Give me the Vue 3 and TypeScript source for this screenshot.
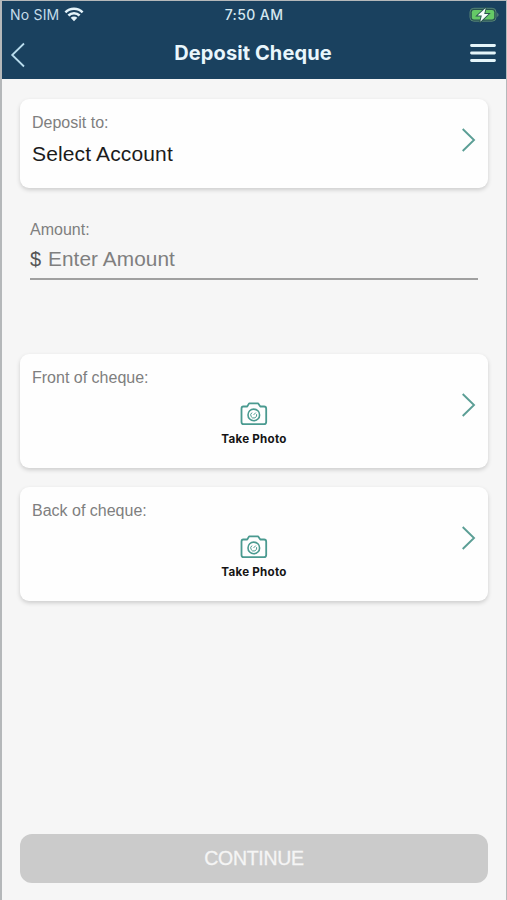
<script setup lang="ts">
interface ChequeSide {
  id: string
  label: string
}

const sides: ChequeSide[] = [
  { id: 'front', label: 'Front of cheque:' },
  { id: 'back', label: 'Back of cheque:' },
]
</script>

<template>
  <div class="screen">
    <header class="header">
      <div class="status">
        <div class="carrier">
          <span>No SIM</span>
          <svg class="wifi" width="20" height="15" viewBox="0 0 20 15">
            <path d="M1.4 5.4A12 12 0 0 1 18.6 5.4M4.4 8.5A7.9 7.9 0 0 1 15.6 8.5" fill="none" stroke="#e4f3fa" stroke-width="2.5" />
            <path d="M6.7 10.8A4.6 4.6 0 0 1 13.3 10.8L10 14.3Z" fill="#e4f3fa" />
          </svg>
        </div>
        <span class="time">7:50 AM</span>
        <svg class="battery" width="31" height="16" viewBox="0 0 31 16">
          <rect x="1" y="1.3" width="26" height="12.9" rx="3.8" fill="#28534f" stroke="#568577" stroke-width="1" />
          <rect x="2.8" y="3" width="22.4" height="9.5" rx="2.2" fill="#65c966" />
          <path d="M28.2 5.4Q31 7.7 28.2 10Z" fill="#568577" />
          <path d="M16.7 .9L8.5 8.5H12.8L11.3 14.8L19.5 6.9H15.2Z" fill="#f4fff9" stroke="#28534f" stroke-width="1.8" paint-order="stroke" />
        </svg>
      </div>
      <div class="nav">
        <svg class="back" width="16" height="26" viewBox="0 0 16 26">
          <path d="M14 1.5L2.2 13L14 24.5" fill="none" stroke="#b9dced" stroke-width="1.8" />
        </svg>
        <h1>Deposit Cheque</h1>
        <svg class="menu" width="26" height="20" viewBox="0 0 26 20">
          <path d="M1.5 2.5H24.5M1.5 10H24.5M1.5 17.5H24.5" stroke="#e5f5fa" stroke-width="2.8" stroke-linecap="round" />
        </svg>
      </div>
    </header>

    <main class="content">
      <section class="card account">
        <div>
          <div class="label">Deposit to:</div>
          <div class="value">Select Account</div>
        </div>
        <svg class="chevron" width="14" height="24" viewBox="0 0 14 24">
          <path d="M.7 1L12 12L.7 23" fill="none" stroke="#5b9e95" stroke-width="1.9" />
        </svg>
      </section>

      <section class="amount">
        <div class="label">Amount:</div>
        <div class="entry"><span class="dollar">$</span><span class="placeholder">Enter Amount</span></div>
      </section>

      <section v-for="side in sides" :key="side.id" class="card photo">
        <div class="label">{{ side.label }}</div>
        <div class="capture">
          <svg width="28" height="24" viewBox="0 0 28 24" fill="none" stroke="#4a9a90" stroke-width="1.8">
            <path d="M3.3 4.5H7.2L9.1 1.4H18.2L20.3 4.5H24Q26.2 4.5 26.2 6.7V20Q26.2 22.2 24 22.2H3.6Q1.5 22.2 1.5 20V6.7Q1.5 4.5 3.3 4.5Z" stroke-linejoin="round" />
            <circle cx="13.8" cy="12.9" r="5.8" stroke-width="1.6" />
            <path d="M12 10.6A3 3 0 1 0 16.6 12.2M13.6 12.9L15.8 10.6" stroke-width="1" />
          </svg>
          <span>Take Photo</span>
        </div>
        <svg class="chevron" width="14" height="24" viewBox="0 0 14 24">
          <path d="M.7 1L12 12L.7 23" fill="none" stroke="#5b9e95" stroke-width="1.9" />
        </svg>
      </section>

      <button class="continue" type="button">CONTINUE</button>
    </main>
  </div>
</template>

<style>
body {
  margin: 0;
  background: #f6f6f6;
}
</style>

<style scoped>
.screen {
  box-sizing: border-box;
  display: flex;
  flex-direction: column;
  width: 507px;
  height: 900px;
  overflow: hidden;
  border: solid #b5b8ba;
  border-width: 1px 1px 0 2px;
  background: #f6f6f6;
  font-family: "Liberation Sans", Arial, sans-serif;
}
.header {
  flex: none;
  height: 78px;
  background: #1a415f;
  color: #e9f6fc;
  font-family: Inter, sans-serif;
}
.status {
  display: grid;
  grid-template-columns: 1fr auto 1fr;
  align-items: center;
  height: 28px;
  padding: 0 6px 0 8px;
  font-size: 14px;
  line-height: 28px;
}
.carrier {
  display: flex;
  align-items: center;
  gap: 5px;
  color: #c5dce9;
  letter-spacing: 0.2px;
}
.wifi {
  margin-top: -2px;
}
.time {
  margin-right: 2px;
  color: #d5e7ef;
  font-weight: 500;
  letter-spacing: 0.4px;
}
.battery {
  justify-self: end;
  margin-top: -1px;
}
.nav {
  display: grid;
  grid-template-columns: 1fr auto 1fr;
  align-items: center;
  height: 46px;
  padding: 0 10px 0 8px;
}
.back {
  margin-top: 4px;
}
.menu {
  justify-self: end;
  margin-top: -1px;
}
h1 {
  margin: 0;
  font-size: 20px;
  font-weight: 650;
  letter-spacing: 0.1px;
  line-height: 48px;
}
.content {
  display: flex;
  flex: 1;
  flex-direction: column;
  padding: 20px 18px 17px;
}
.card {
  box-sizing: border-box;
  border-radius: 9px;
  background: #fefefe;
  box-shadow: 0 2px 4px rgba(0, 0, 0, 0.17);
}
.account {
  display: flex;
  justify-content: space-between;
  height: 89px;
  padding: 14px 12px;
}
.account .chevron {
  margin-top: 15px;
}
.label {
  color: #7f7f7f;
  font-size: 16px;
  line-height: 20px;
}
.value {
  margin-top: 8px;
  color: #1b1b1b;
  font-size: 21px;
  letter-spacing: 0.14px;
  line-height: 26px;
}
.amount {
  margin: 32px 10px 74px;
  border-bottom: 2px solid #a0a0a0;
}
.entry {
  display: flex;
  gap: 7px;
  height: 38px;
  font-size: 20.8px;
  letter-spacing: 0.08px;
  line-height: 38px;
}
.dollar {
  width: 11px;
  color: #555;
  font-size: 20px;
}
.placeholder {
  color: #7f7f7f;
}
.photo {
  display: grid;
  grid-template-columns: 1fr auto 1fr;
  height: 114px;
  padding: 14px 12px;
}
.photo + .photo {
  margin-top: 19px;
}
.photo .label {
  white-space: nowrap;
}
.photo .chevron {
  justify-self: end;
  margin-top: 25px;
}
.capture {
  display: flex;
  flex-direction: column;
  align-items: center;
  padding-top: 34px;
  color: #151515;
  font-family: Inter, sans-serif;
  font-size: 11.6px;
  font-weight: 700;
  letter-spacing: 0.25px;
  line-height: 16px;
}
.capture svg {
  margin-bottom: 5px;
}
.continue {
  height: 49px;
  margin-top: auto;
  padding: 0;
  border: 0;
  border-radius: 12px;
  background: #cbcbcb;
  color: #f5f5f5;
  font-family: inherit;
  font-size: 19.5px;
  letter-spacing: -0.3px;
  -webkit-text-stroke: 0.3px #f5f5f5;
}
</style>
